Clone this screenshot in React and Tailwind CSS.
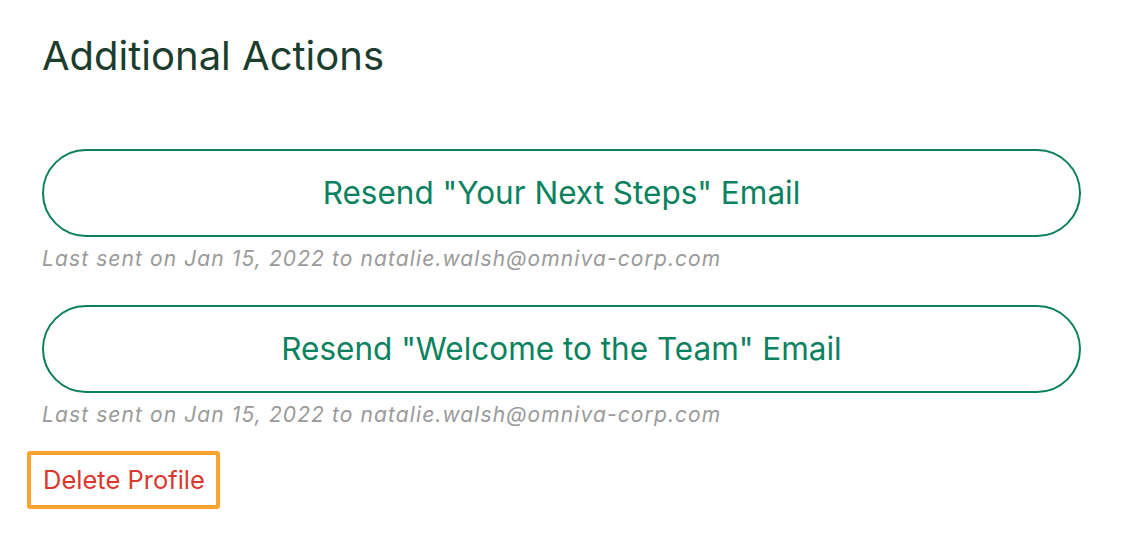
import React from 'react';

const font = { fontFamily: 'Inter, "Noto Sans", sans-serif' };

function ResendButton({ label }) {
    return (
        <button
            type="button"
            className="flex h-[88px] w-full items-center justify-center rounded-full border-2 border-[#0b7f5e] bg-white text-[31.5px] text-[#0a8260]"
        >
            {label}
        </button>
    );
}

function LastSent() {
    return (
        <p className="mt-[8px] text-[21px] italic leading-[28px] tracking-[1.1px] text-[#9a9a9a]">
            Last sent on Jan 15, 2022 to natalie.walsh@omniva-corp.com
        </p>
    );
}

export default function App() {
    return (
        <div className="min-h-[556px] w-[1124px] bg-white" style={font}>
            <div className="pl-[42px] pr-[43px] pt-[30px]">
                <h2 className="text-[40px] leading-[52px] text-[#1c3d2e]">Additional Actions</h2>

                <div className="mt-[67px]">
                    <ResendButton label={'Resend "Your Next Steps" Email'} />
                    <LastSent />
                </div>

                <div className="mt-[32px]">
                    <ResendButton label={'Resend "Welcome to the Team" Email'} />
                    <LastSent />
                </div>
            </div>

            <div className="ml-[27px] mt-[22px] inline-flex h-[58px] items-center rounded-[3px] border-4 border-[#ffa42d] pl-[12px] pr-[11px]">
                <span className="text-[25.5px] text-[#d9382e]">Delete Profile</span>
            </div>
        </div>
    );
}
